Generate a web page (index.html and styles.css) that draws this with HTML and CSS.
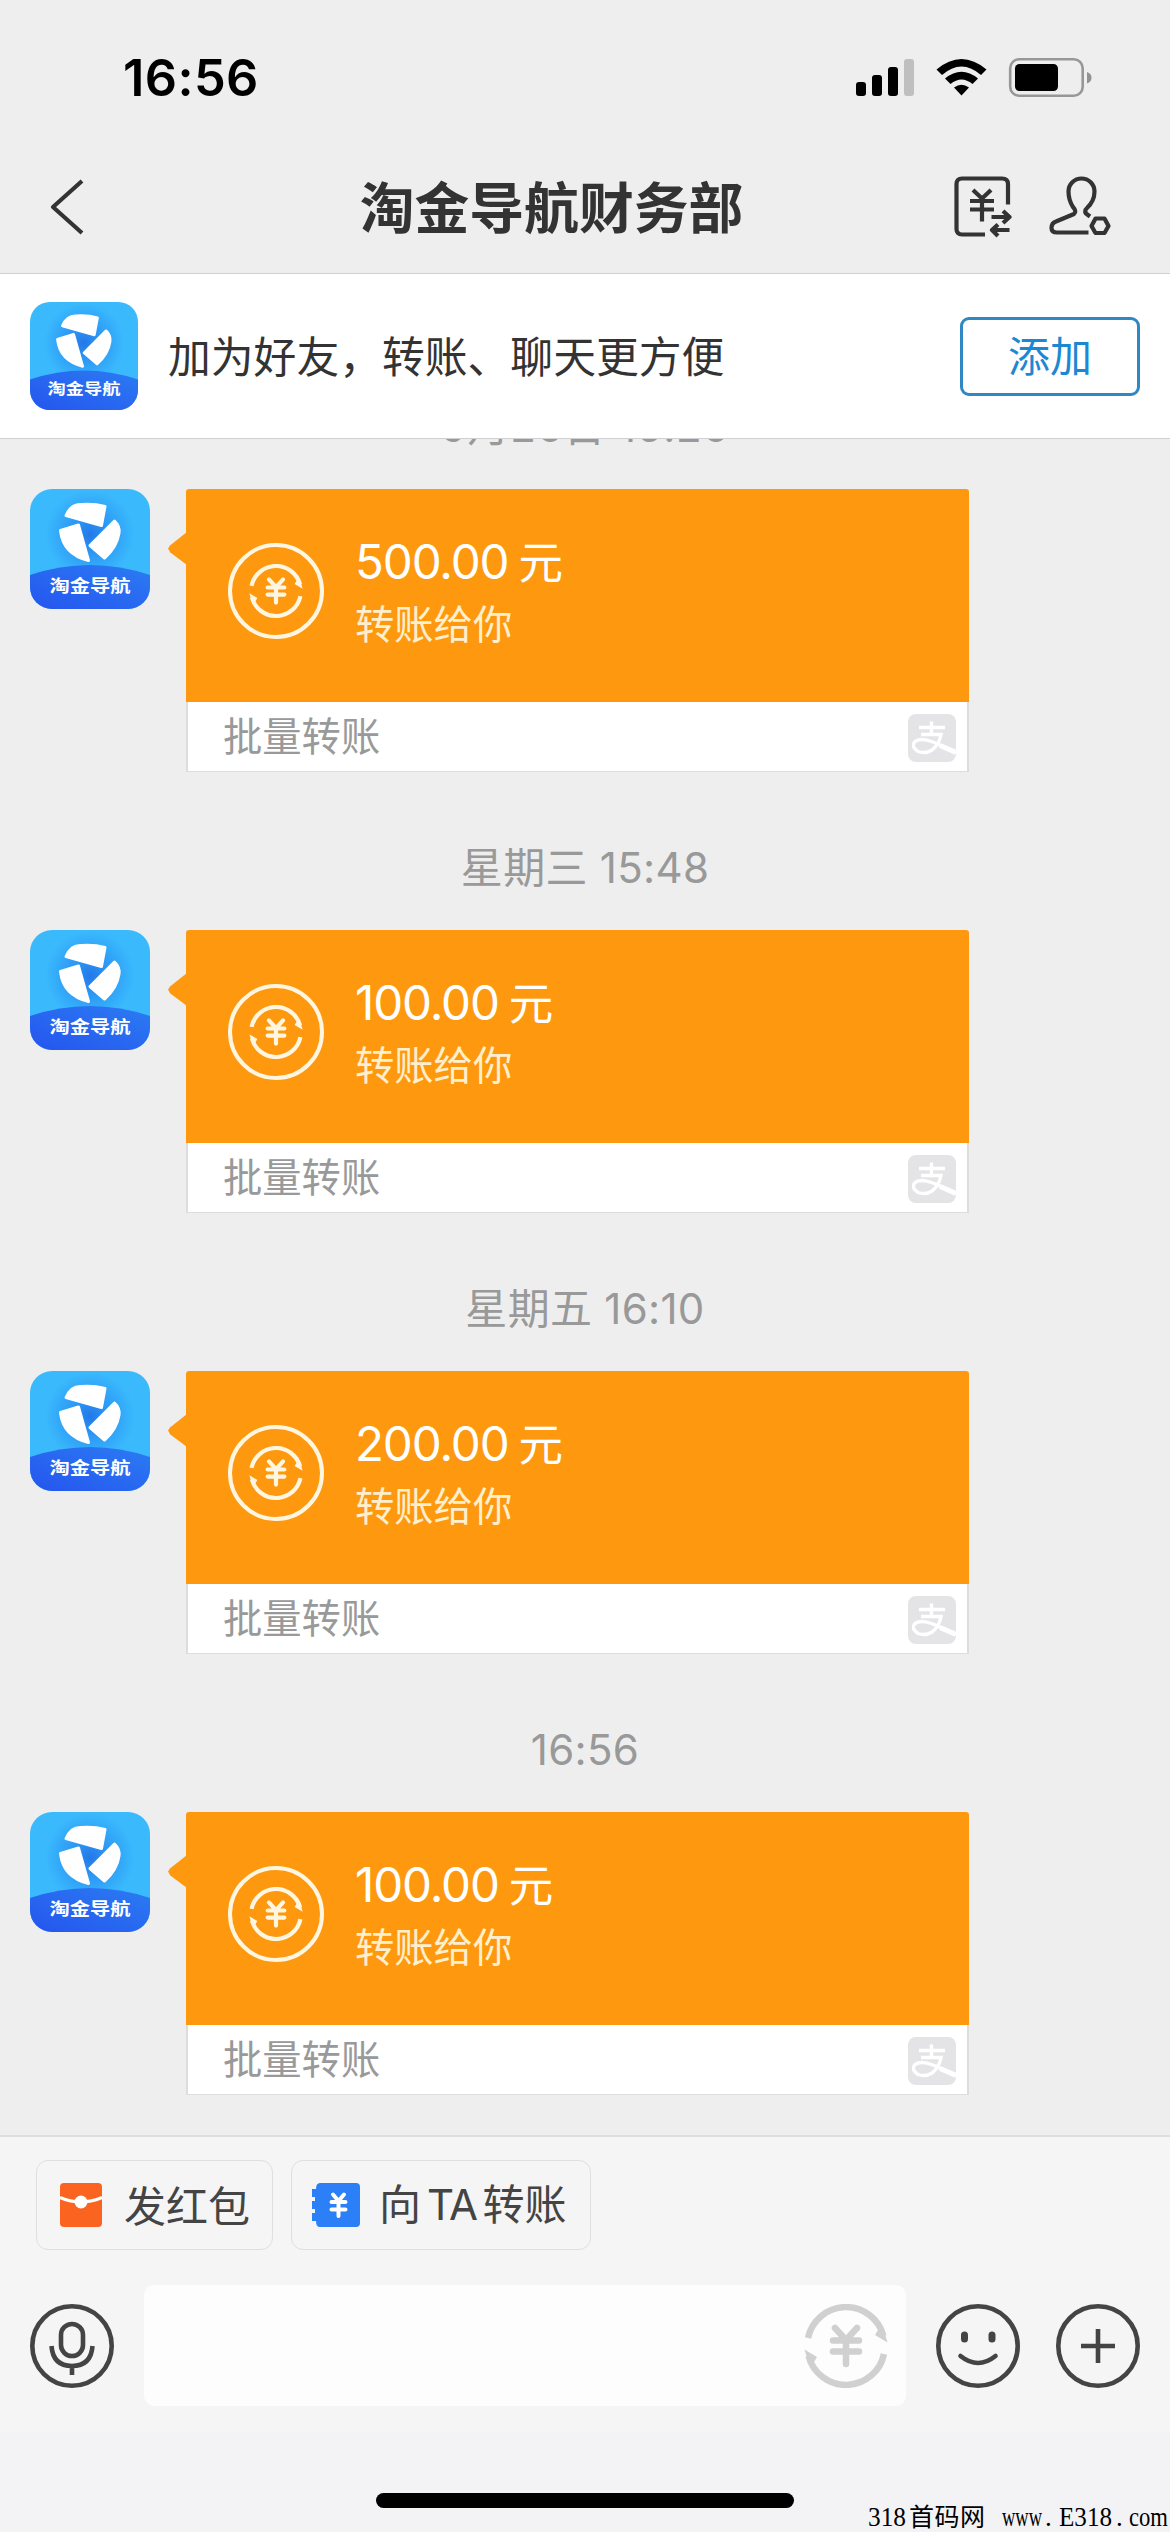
FILE: index.html
```html
<!DOCTYPE html>
<html lang="zh-CN">
<head>
<meta charset="utf-8">
<title>淘金导航财务部</title>
<link rel="stylesheet" href="styles.css">
</head>
<body>
<svg class="defs" aria-hidden="true">
  <defs>
    <linearGradient id="wave" x1="0" x2="1" y1="1" y2="0"><stop offset="0" stop-color="#2555ee"/><stop offset="1" stop-color="#2b7cf3"/></linearGradient>
    <radialGradient id="sky" cx=".5" cy=".38" r=".5"><stop offset="0" stop-color="#2478e8"/><stop offset=".3" stop-color="#2c97f5"/><stop offset=".75" stop-color="#3abafd"/></radialGradient>
    <clipPath id="tile"><rect width="120" height="120" rx="22"/></clipPath>
    <symbol id="logo" viewBox="0 0 120 120">
      <g clip-path="url(#tile)">
        <rect width="120" height="120" fill="url(#sky)"/>
        <path d="M0 86Q60 66 120 86V120H0Z" fill="url(#wave)"/>
      </g>
      <g fill="#fff" stroke="#fff" stroke-width="3" stroke-linejoin="round">
        <path d="M36 26.500Q41 15 51 15.500Q64 14.500 75 17.500L71.500 36.500Z"/>
        <path d="M84.500 32Q90 37 89 44Q87 58 74.500 69L60 56.500Z"/>
        <path d="M30.500 41.500L48.500 36L58.500 71.500Q33 65 30.500 41.500Z"/>
      </g>
      <text class="logo-text" x="19.500" y="102.500" textLength="81" lengthAdjust="spacingAndGlyphs">淘金导航</text>
    </symbol>
    <symbol id="swap" viewBox="-42 -42 84 84">
      <g fill="none" stroke="currentColor" stroke-width="6.500">
        <path d="M-38 -8A38.800 38.800 0 0 1 37.500 -10"/>
        <path d="M38 8A38.800 38.800 0 0 1 -37.500 10"/>
        <path stroke-linecap="round" d="M-11 -18L0 -6L11 -18M-13 -5.500H13M-13 5.500H13M0 -6V18"/>
      </g>
      <path fill="currentColor" d="M41.500 -3.500L29 -11L32 -16L38 -15ZM-41.500 3.500L-29 11L-32 16L-38 15Z"/>
    </symbol>
    <symbol id="pay" viewBox="0 0 48 48">
      <rect width="48" height="48" rx="8" fill="#e4e4e6"/>
      <g fill="none" stroke="#fff" stroke-width="3.400">
        <path d="M11 13.500H37M23.500 7.500V21M13 20.500H33Q31 31 24 36Q18 40 10 37.500Q3 33 6.500 28Q12 23 25 28L47 37.500"/>
        <path stroke-width="5" d="M32 31.500L48 38.500"/>
      </g>
    </symbol>
  </defs>
</svg>
<div class="screen">
  <header class="top">
    <div class="status">
      <span class="clock">16:56</span>
      <svg class="signals" width="238" height="42" viewBox="0 0 238 42">
        <rect x="0" y="25" width="10" height="14" rx="3"/><rect x="16" y="18" width="10" height="21" rx="3"/><rect x="32" y="10" width="10" height="29" rx="3"/><rect x="48" y="2" width="10" height="37" rx="3" fill="#bfbfbf"/>
        <path d="M80.500 12.500Q105.500 -8.500 130.500 12.500L125 18Q105.500 1 86 18ZM89 21.500Q105.500 8 122 21.500L116.500 27Q105.500 18 94.500 27ZM98 30.500Q105.500 25 113 30.500L105.500 38.500Z"/>
        <rect x="154.200" y="2.200" width="72.500" height="36.500" rx="9" fill="none" stroke="#979797" stroke-width="2.600"/>
        <rect x="159" y="7" width="43" height="27" rx="4.500"/>
        <path d="M231 15Q235.500 16.500 235.500 20.500Q235.500 25 231 26.500Z" fill="#929292"/>
      </svg>
    </div>
    <nav class="nav">
      <svg class="back" width="38" height="60" viewBox="0 0 38 60"><path d="M34 4L5 30L34 56"/></svg>
      <h1>淘金导航财务部</h1>
      <div class="tools">
        <svg width="58" height="62" viewBox="0 0 58 62"><path d="M31 58.500H8Q2.500 58.500 2.500 53V8Q2.500 2.500 8 2.500H48Q54 2.500 54 8V28.500M19 14L28 22.500L37 14M16 25H40M16 33.500H40M28 22V45.500M37.500 41H55.500M49 35L55.500 41L49 47M55.500 54H38M44 48.500L38 54L44 60"/></svg>
        <svg width="63" height="62" viewBox="0 0 63 62"><path d="M41 40.500L37 37.500Q35 34.500 38 32Q45.500 25 45.500 15.500A13 13 0 0 0 19.500 15.500Q19.500 24 24 31Q28 35.500 25 38L7 45.500Q2.500 47 2.500 52Q2.500 56.500 8 56.500H39.500M46.500 42.500H55.500L59.500 50L55.500 57H46.500L42.500 50Z"/></svg>
      </div>
    </nav>
  </header>

  <section class="banner">
    <svg class="avatar-sm"><use href="#logo"/></svg>
    <p>加为好友，转账、聊天更方便</p>
    <button class="add">添加</button>
  </section>

  <main class="chat">
    <time>9月26日 15:26</time>
    <article class="message">
      <svg class="avatar"><use href="#logo"/></svg>
      <div class="bubble">
        <div class="transfer"><span class="coin"><svg><use href="#swap"/></svg></span><div><p class="amount">500.00<span>元</span></p><p class="note">转账给你</p></div></div>
        <div class="source"><span>批量转账</span><svg><use href="#pay"/></svg></div>
      </div>
    </article>
    <time>星期三 15:48</time>
    <article class="message">
      <svg class="avatar"><use href="#logo"/></svg>
      <div class="bubble">
        <div class="transfer"><span class="coin"><svg><use href="#swap"/></svg></span><div><p class="amount">100.00<span>元</span></p><p class="note">转账给你</p></div></div>
        <div class="source"><span>批量转账</span><svg><use href="#pay"/></svg></div>
      </div>
    </article>
    <time>星期五 16:10</time>
    <article class="message">
      <svg class="avatar"><use href="#logo"/></svg>
      <div class="bubble">
        <div class="transfer"><span class="coin"><svg><use href="#swap"/></svg></span><div><p class="amount">200.00<span>元</span></p><p class="note">转账给你</p></div></div>
        <div class="source"><span>批量转账</span><svg><use href="#pay"/></svg></div>
      </div>
    </article>
    <time>16:56</time>
    <article class="message">
      <svg class="avatar"><use href="#logo"/></svg>
      <div class="bubble">
        <div class="transfer"><span class="coin"><svg><use href="#swap"/></svg></span><div><p class="amount">100.00<span>元</span></p><p class="note">转账给你</p></div></div>
        <div class="source"><span>批量转账</span><svg><use href="#pay"/></svg></div>
      </div>
    </article>
  </main>

  <footer class="bottom">
    <div class="chips">
      <button class="chip red"><svg width="42" height="44" viewBox="0 0 42 44"><rect width="42" height="44" rx="4" fill="#fb6321"/><path d="M0 14.500Q21 23.500 42 14.500" fill="none" stroke="#fff" stroke-width="3"/><circle cx="21" cy="19" r="6.500" fill="#fff"/></svg><span>发红包</span></button>
      <button class="chip blue"><svg width="48" height="44" viewBox="0 0 48 44"><path d="M8 0H44Q48 0 48 4V40Q48 44 44 44H8Q4 44 4 38H0V30H3V26H0V18H3V14H0V6H4Q4 0 8 0Z" fill="#2b7ff7"/><path d="M21 11.500L26.500 18L32 11.500M19.500 19H33.500M19.500 26.500H33.500M26.500 18V33" fill="none" stroke="#fff" stroke-width="4" stroke-linecap="round"/></svg><span>向<i>TA</i>转账</span></button>
    </div>
    <div class="composer">
      <svg class="round" viewBox="-42 -42 84 84"><circle r="39.700"/><rect x="-11" y="-22" width="22" height="32" rx="11"/><path d="M-20.500 0Q-19 20 0 20Q19 20 20.500 0M0 20V29"/></svg>
      <div class="field"><svg><use href="#swap"/></svg></div>
      <svg class="round" viewBox="-42 -42 84 84"><circle r="39.700"/><path d="M-13.500 -11V-7M14 -11V-7" stroke-width="7" stroke-linecap="round"/><path d="M-17.500 10Q0 24 17.500 10" stroke-linecap="round"/></svg>
      <svg class="round" viewBox="-42 -42 84 84"><circle r="39.700"/><path d="M-17 0H17M0 -17V17"/></svg>
    </div>
    <div class="home"><i></i></div>
  </footer>
  <svg class="watermark" width="304" height="32" viewBox="0 0 304 32">
    <text x="2" y="26" textLength="38" lengthAdjust="spacingAndGlyphs">318</text>
    <text class="cjk" x="43" y="26" textLength="76">首码网</text>
    <text x="136" y="26" textLength="40" lengthAdjust="spacingAndGlyphs">www</text>
    <text x="179" y="26">.</text>
    <text x="193" y="26" textLength="53" lengthAdjust="spacingAndGlyphs">E318</text>
    <text x="250" y="26">.</text>
    <text x="263" y="26" textLength="39" lengthAdjust="spacingAndGlyphs">com</text>
  </svg>
</div>
</body>
</html>
```

FILE: styles.css
```css
* { box-sizing: border-box; }
body { margin: 0; background: #eee; font-family: "Noto Sans CJK SC", sans-serif; color: #333; }
h1, p { margin: 0; font-weight: 400; }
button { font: inherit; color: inherit; padding: 0; margin: 0; }
i { font-style: normal; }
svg { display: block; flex: none; }
.defs { position: absolute; width: 0; height: 0; }
.screen { position: relative; width: 1170px; height: 2532px; overflow: hidden; display: flex; flex-direction: column; background: #eee; }

.top { height: 274px; border-bottom: 1px solid #d0d0d2; flex: none; }
.status { height: 156px; padding: 0 76px 0 123px; display: flex; justify-content: space-between; align-items: center; color: #000; }
.clock { font: 600 50.5px/60px Inter, sans-serif; letter-spacing: .4px; }
.nav { height: 102px; padding: 0 58px 0 48px; display: grid; grid-template-columns: 160px 1fr 160px; align-items: center; }
.nav svg { fill: none; stroke: #333; stroke-width: 4.2; stroke-linejoin: round; }
.nav h1 { font-size: 54.8px; font-weight: 700; line-height: 80px; text-align: center; white-space: nowrap; padding: 0 59px 6px 0; margin-right: -2px; }
.tools { display: flex; justify-content: space-between; padding-left: 2px; }

.banner { height: 165px; flex: none; display: flex; align-items: center; padding: 0 30px; background: #fff; border-bottom: 1px solid #d0d0d2; font-size: 42.8px; }
.avatar-sm { width: 108px; height: 108px; margin-right: 30px; }
.banner p { flex: 1; white-space: nowrap; padding-bottom: 5px; }
.add { width: 180px; height: 79px; border: 3px solid #2f88c4; border-radius: 9px; background: #fff; color: #1d88d2; font-size: 42px; line-height: 68px; padding-bottom: 4px; }

.chat { height: 1696px; flex: none; overflow: hidden; padding: 0 30px; display: flex; flex-direction: column; }
.chat time { flex: none; height: 60px; margin: 66px 0 32px; line-height: 60px; font-family: Inter, "Noto Sans CJK SC", sans-serif; font-size: 42px; letter-spacing: .3px; text-align: center; color: #999; }
.chat time:first-child { margin-top: -42px; letter-spacing: .8px; }
.message { flex: none; height: 283px; display: flex; align-items: flex-start; gap: 36px; }
.avatar { width: 120px; height: 120px; }
.bubble { position: relative; width: 783px; height: 283px; }
.bubble::before { content: ""; position: absolute; left: -18px; top: 43px; width: 19px; height: 33px; background: #fe990f; clip-path: polygon(100% 0, 12% 40%, 0 50%, 12% 62%, 100% 100%); }
.transfer { height: 213px; padding: 54px 42px 0; display: flex; gap: 31px; background: #fe990f; border-radius: 3px 3px 0 0; color: #fff; }
.coin { width: 96px; height: 96px; border: 4px solid #fff6e2; border-radius: 50%; display: grid; place-items: center; color: #fff6e2; }
.coin svg { width: 54px; height: 54px; }
.amount { margin-top: -14px; height: 62px; line-height: 62px; font-family: Inter, sans-serif; font-size: 47.5px; letter-spacing: -1.1px; white-space: nowrap; }
.amount span { font: 44.5px/62px "Noto Sans CJK SC", sans-serif; margin-left: 10px; }
.note { height: 60px; line-height: 60px; margin-top: 1px; font-size: 39.3px; color: #ffefcd; }
.source { height: 70px; padding: 0 11px 0 35px; display: flex; align-items: center; justify-content: space-between; background: #fff; border: 1px solid #ddd; border-width: 0 2px 1px; font-size: 39.3px; color: #999; line-height: 64px; }
.source span { padding-bottom: 5px; }
.source svg { width: 48px; height: 48px; margin-top: 3px; }

.bottom { height: 397px; flex: none; background: #f5f5f5; border-top: 2px solid #dedee0; }
.chips { height: 113px; padding: 23px 36px 0; display: flex; gap: 18px; }
.chip { height: 90px; display: flex; align-items: center; border: 1.5px solid #dfdfe1; border-radius: 12px; background: #f5f5f5; font-size: 42px; color: #444; }
.red { width: 237px; padding-left: 23px; gap: 22px; }
.blue { width: 300px; padding-left: 20px; gap: 19px; }
.chip span { white-space: nowrap; line-height: 84px; margin-top: -3px; }
.chip i { font-family: Inter, sans-serif; margin: 0 6px; letter-spacing: -1.5px; }
.composer { margin-top: 35px; height: 121px; padding: 0 30px; display: flex; align-items: center; }
.round { width: 84px; height: 84px; fill: none; stroke: #444; stroke-width: 4.6; }
.field { width: 762px; height: 121px; margin: 0 30px; padding-right: 18px; border-radius: 10px; background: #fdfdfd; display: flex; align-items: center; justify-content: flex-end; color: #d0d0d0; }
.field svg { width: 84px; height: 84px; }
.round + .round { margin-left: 36px; }
.home { margin-top: 26px; height: 100px; background: #f3f3f6; display: flex; justify-content: center; padding-top: 61px; }
.home i { width: 418px; height: 15px; border-radius: 8px; background: #000; }
.watermark { position: absolute; right: 0; bottom: 0; font: 27px "Liberation Serif", serif; fill: #000; }
.watermark .cjk { font: 25px "Noto Sans CJK SC", sans-serif; }
.logo-text { font: 700 17px "Noto Sans CJK SC", sans-serif; fill: #fff; }
```
